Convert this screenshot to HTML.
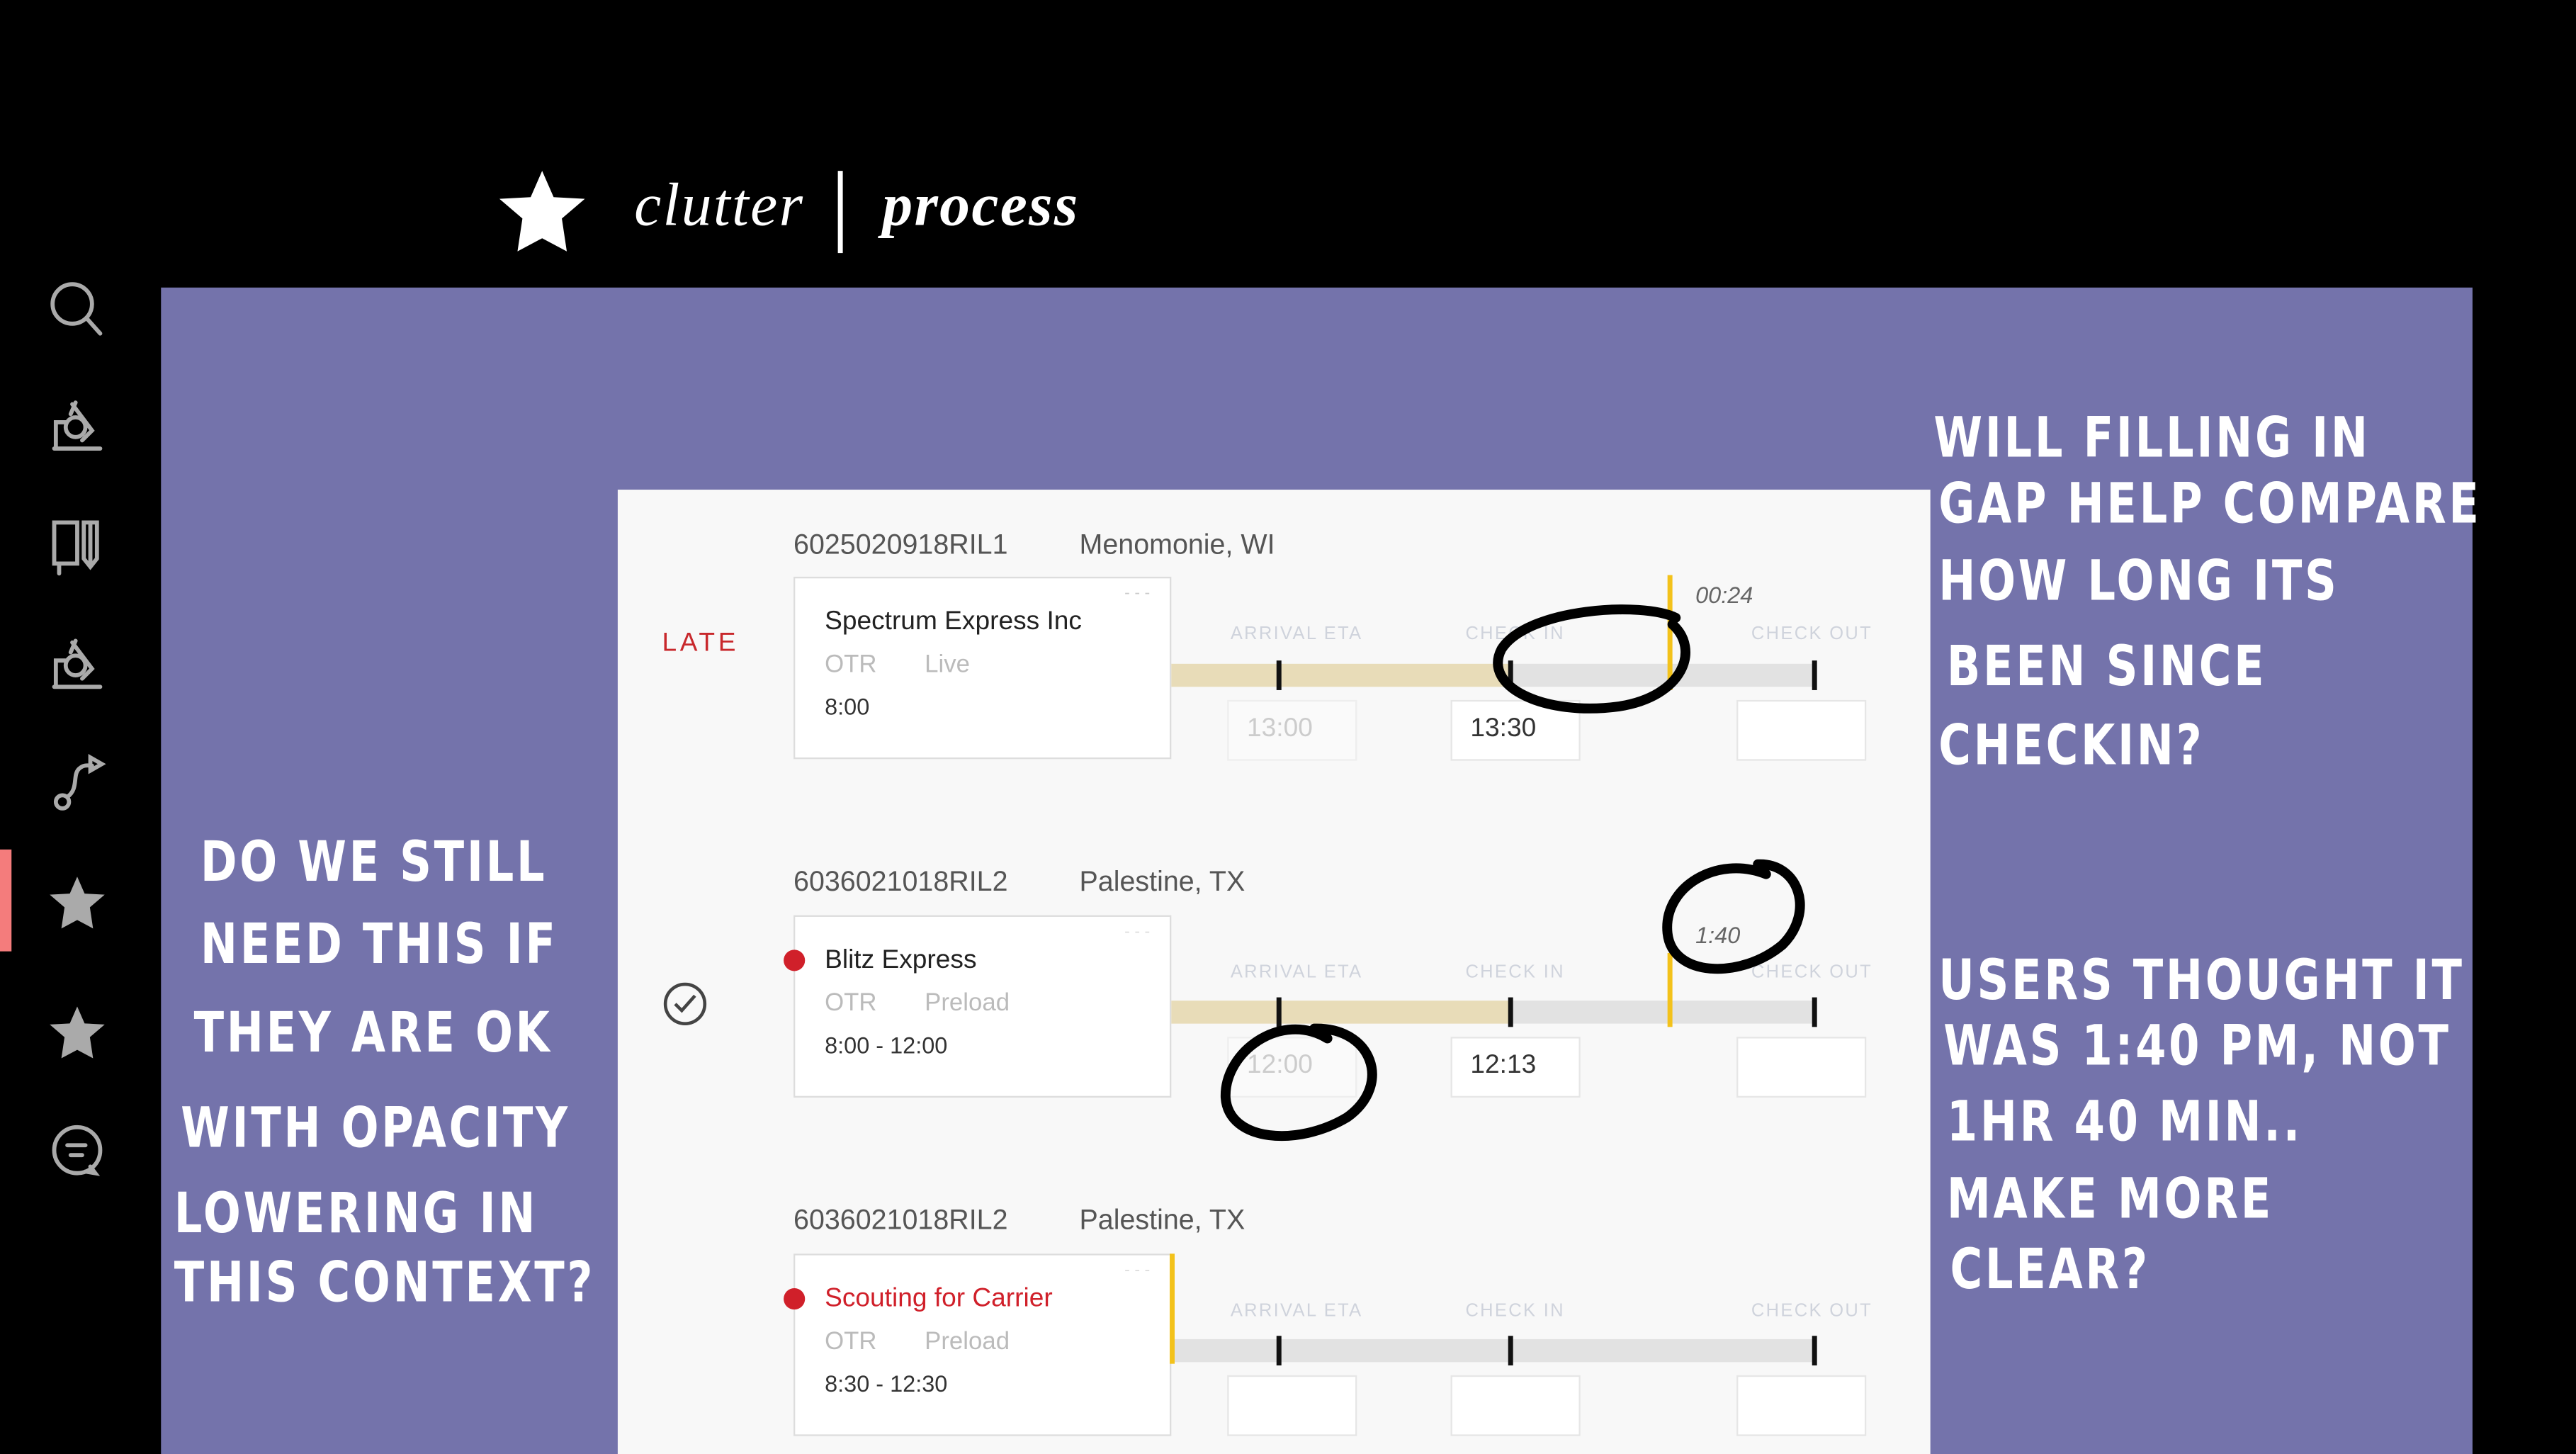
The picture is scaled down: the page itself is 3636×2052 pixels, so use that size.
<!DOCTYPE html>
<html><head><meta charset="utf-8"><style>
html,body{margin:0;padding:0;background:#000;width:3636px;height:2052px;overflow:hidden}
#w{position:absolute;left:0;top:0;width:1568px;height:885px;transform:scale(2.31888);transform-origin:0 0;font-family:"Liberation Sans",sans-serif}
.a{position:absolute}
.hw{position:absolute;color:#fff;font-family:"DejaVu Sans","Liberation Sans",sans-serif;font-weight:bold;font-size:34px;letter-spacing:2px;white-space:nowrap;transform:scaleX(0.79);transform-origin:0 0;line-height:1}
.id{position:absolute;font-size:17px;color:#555;white-space:nowrap}
.box{position:absolute;left:483px;width:230px;height:111px;background:#fff;border:1px solid #ddd;box-sizing:border-box}
.lbl{position:absolute;font-size:11px;color:#cfd3dc;letter-spacing:1px;white-space:nowrap}
.inp{position:absolute;width:79px;height:37px;background:#fff;border:1px solid #e6e6e6;box-sizing:border-box;font-size:16px;color:#333;padding:8px 0 0 11px}
.tick{position:absolute;width:3px;height:18px;background:#111}
.t1{position:absolute;left:18px;top:18px;font-size:16px;color:#222}
.t2{position:absolute;left:18px;top:44px;font-size:15px;color:#bbb}
.t3{position:absolute;left:18px;top:70px;font-size:14px;color:#333}
.dot{position:absolute;width:13px;height:13px;border-radius:50%;background:#d0202a;z-index:2}
</style></head><body><div id="w">
<svg class="a" style="left:302px;top:102px" width="56" height="52" viewBox="0 0 56 52"><polygon points="28,2 35,18 54,19 40,31 43,51 28,43 13,51 16,31 2,19 21,18" fill="#fff"/></svg>
<div class="a" style="left:386px;top:104px;font-family:'Liberation Serif',serif;font-style:italic;font-size:37px;color:#fff;letter-spacing:1px">clutter</div>
<div class="a" style="left:510px;top:104px;width:3px;height:50px;background:#fff"></div>
<div class="a" style="left:537px;top:104px;font-family:'Liberation Serif',serif;font-style:italic;font-weight:bold;font-size:37px;color:#fff;letter-spacing:1px">process</div>
<div class="a" style="left:0;top:517px;width:7px;height:62px;background:#f47c7c"></div>
<svg class="a" style="left:0;top:160px" width="98" height="580" viewBox="0 160 98 580" fill="none" stroke="#aaa" stroke-width="2.5" stroke-linecap="round">
<circle cx="44" cy="185" r="12"/><line x1="53" y1="194" x2="61" y2="203"/>
<path d="M33 273 H61 M34 273 V257 H40 M40 260 a6 6 0 1 0 12 0 a6 6 0 1 0 -12 0 M44 246 L56 262 L50 268 M46 245 L43 252"/>
<path transform="translate(0,145)" d="M33 273 H61 M34 273 V257 H40 M40 260 a6 6 0 1 0 12 0 a6 6 0 1 0 -12 0 M44 246 L56 262 L50 268 M46 245 L43 252"/>
<rect x="33" y="318" width="14" height="25"/><path d="M36 343 V349 M55 318 V343 M51 318 h8 v22 l-4 5 l-4 -5 z"/>
<circle cx="38" cy="488" r="4"/><path d="M41 485 C48 480 44 472 48 468 C51 465 54 466 56 466"/><path d="M55 461 L62 465 L55 469 Z"/>
<circle cx="47" cy="700" r="14"/><path d="M41 697 H52 M43 703 H50 M55 710 L58 714 L52 713"/>
</svg>
<svg class="a" style="left:29px;top:532px" width="36" height="34" viewBox="0 0 56 52"><polygon points="28,2 35,18 54,19 40,31 43,51 28,43 13,51 16,31 2,19 21,18" fill="#aaa"/></svg>
<svg class="a" style="left:29px;top:611px" width="36" height="34" viewBox="0 0 56 52"><polygon points="28,2 35,18 54,19 40,31 43,51 28,43 13,51 16,31 2,19 21,18" fill="#aaa"/></svg>
<div class="a" style="left:98px;top:175px;width:1407px;height:710px;background:#7473ab"></div>
<div class="a" style="left:376px;top:298px;width:799px;height:587px;background:#f8f8f8"></div>

<div class="id" style="left:483px;top:322px">6025020918RIL1</div>
<div class="id" style="left:657px;top:322px">Menomonie, WI</div>
<div class="a" style="left:403px;top:383px;color:#c8282c;font-size:16px;letter-spacing:2px">LATE</div>
<div class="box" style="top:351px"><div class="t1">Spectrum Express Inc</div><div class="t2">OTR &nbsp;&nbsp;&nbsp;&nbsp;&nbsp; Live</div><div class="t3">8:00</div><div class="a" style="right:12px;top:4px;color:#ccc;font-size:10px">- - -</div></div>
<div class="lbl" style="left:749px;top:380px">ARRIVAL ETA</div><div class="lbl" style="left:892px;top:380px">CHECK IN</div><div class="lbl" style="left:1066px;top:380px">CHECK OUT</div>
<div class="a" style="left:713px;top:404px;width:207px;height:14px;background:#e8dcb8"></div>
<div class="a" style="left:920px;top:404px;width:185px;height:14px;background:#e2e2e2"></div>
<div class="tick" style="left:777px;top:402px"></div><div class="tick" style="left:918px;top:402px"></div><div class="tick" style="left:1103px;top:402px"></div>
<div class="a" style="left:1015px;top:350px;width:3px;height:70px;background:#f3c21b"></div>
<div class="a" style="left:1032px;top:354px;font-size:14px;font-style:italic;color:#666">00:24</div>
<div class="inp" style="left:747px;top:426px;color:#ccc;border-color:#eee;background:#fafafa">13:00</div>
<div class="inp" style="left:883px;top:426px">13:30</div>
<div class="inp" style="left:1057px;top:426px"></div>

<div class="id" style="left:483px;top:527px">6036021018RIL2</div>
<div class="id" style="left:657px;top:527px">Palestine, TX</div>
<svg class="a" style="left:403px;top:597px" width="28" height="28"><circle cx="14" cy="14" r="12" fill="none" stroke="#444" stroke-width="2"/><path d="M8 14 L12 18 L20 9" fill="none" stroke="#444" stroke-width="2"/></svg>
<div class="box" style="top:557px"><div class="t1">Blitz Express</div><div class="t2">OTR &nbsp;&nbsp;&nbsp;&nbsp;&nbsp; Preload</div><div class="t3">8:00 - 12:00</div><div class="a" style="right:12px;top:4px;color:#ddd;font-size:10px">- - -</div></div>
<div class="dot" style="left:477px;top:578px"></div>
<div class="lbl" style="left:749px;top:586px">ARRIVAL ETA</div><div class="lbl" style="left:892px;top:586px">CHECK IN</div><div class="lbl" style="left:1066px;top:586px">CHECK OUT</div>
<div class="a" style="left:713px;top:609px;width:207px;height:14px;background:#e8dcb8"></div>
<div class="a" style="left:920px;top:609px;width:185px;height:14px;background:#e2e2e2"></div>
<div class="tick" style="left:777px;top:607px"></div><div class="tick" style="left:918px;top:607px"></div><div class="tick" style="left:1103px;top:607px"></div>
<div class="a" style="left:1015px;top:580px;width:3px;height:45px;background:#f3c21b"></div>
<div class="a" style="left:1032px;top:561px;font-size:14px;font-style:italic;color:#666">1:40</div>
<div class="inp" style="left:747px;top:631px;color:#ccc;border-color:#eee;background:#fafafa">12:00</div>
<div class="inp" style="left:883px;top:631px">12:13</div>
<div class="inp" style="left:1057px;top:631px"></div>

<div class="id" style="left:483px;top:733px">6036021018RIL2</div>
<div class="id" style="left:657px;top:733px">Palestine, TX</div>
<div class="box" style="top:763px"><div class="t1" style="color:#d0202a">Scouting for Carrier</div><div class="t2">OTR &nbsp;&nbsp;&nbsp;&nbsp;&nbsp; Preload</div><div class="t3">8:30 - 12:30</div><div class="a" style="right:12px;top:4px;color:#ddd;font-size:10px">- - -</div></div>
<div class="dot" style="left:477px;top:784px"></div>
<div class="lbl" style="left:749px;top:792px">ARRIVAL ETA</div><div class="lbl" style="left:892px;top:792px">CHECK IN</div><div class="lbl" style="left:1066px;top:792px">CHECK OUT</div>
<div class="a" style="left:713px;top:815px;width:392px;height:14px;background:#e2e2e2"></div>
<div class="a" style="left:712px;top:763px;width:3px;height:67px;background:#f3c21b"></div>
<div class="tick" style="left:777px;top:813px"></div><div class="tick" style="left:918px;top:813px"></div><div class="tick" style="left:1103px;top:813px"></div>
<div class="inp" style="left:747px;top:837px"></div><div class="inp" style="left:883px;top:837px"></div><div class="inp" style="left:1057px;top:837px"></div>

<svg class="a" style="left:0;top:0;z-index:3" width="1568" height="885" fill="none" stroke="#000" stroke-width="6" stroke-linecap="round">
<path d="M1020 376 C1000 366 930 370 914 395 C902 418 940 436 985 430 C1025 424 1035 395 1018 380"/>
<path d="M1075 532 C1045 520 1012 540 1015 568 C1018 595 1060 596 1085 575 C1105 555 1095 525 1070 526"/>
<path d="M808 632 C780 615 745 640 746 668 C748 695 790 698 820 680 C848 660 835 625 800 626"/>
</svg>

<div class="hw" style="left:122px;top:508px">DO WE STILL</div>
<div class="hw" style="left:122px;top:558px">NEED THIS IF</div>
<div class="hw" style="left:118px;top:612px">THEY ARE OK</div>
<div class="hw" style="left:110px;top:670px">WITH OPACITY</div>
<div class="hw" style="left:106px;top:722px">LOWERING IN</div>
<div class="hw" style="left:106px;top:764px">THIS CONTEXT?</div>

<div class="hw" style="left:1177px;top:250px">WILL FILLING IN</div>
<div class="hw" style="left:1180px;top:290px">GAP HELP COMPARE</div>
<div class="hw" style="left:1180px;top:337px">HOW LONG ITS</div>
<div class="hw" style="left:1185px;top:389px">BEEN SINCE</div>
<div class="hw" style="left:1180px;top:437px">CHECKIN?</div>

<div class="hw" style="left:1180px;top:580px">USERS THOUGHT IT</div>
<div class="hw" style="left:1183px;top:620px">WAS 1:40 PM, NOT</div>
<div class="hw" style="left:1185px;top:666px">1HR 40 MIN..</div>
<div class="hw" style="left:1185px;top:713px">MAKE MORE</div>
<div class="hw" style="left:1187px;top:756px">CLEAR?</div>
</div></body></html>
